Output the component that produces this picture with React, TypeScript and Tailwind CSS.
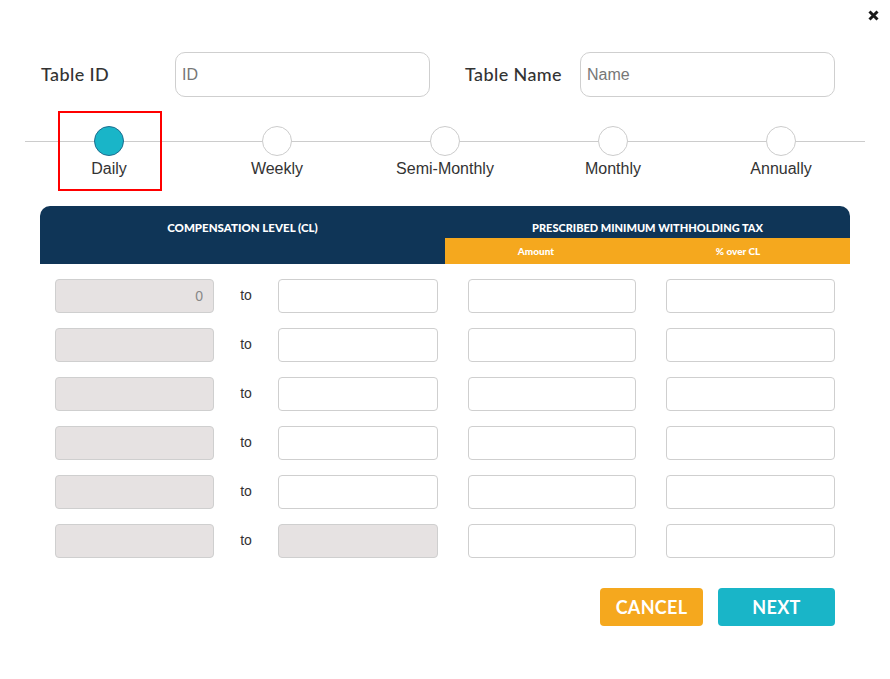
import React from 'react';

const steps = ['Daily', 'Weekly', 'Semi-Monthly', 'Monthly', 'Annually'];
const rows = [0, 1, 2, 3, 4, 5];

const inputBase =
  'h-[34px] rounded-[4px] border border-[#cfcfcf] px-[10px] text-[14px] outline-none box-border';

export default function App() {
  return (
    <div className="relative w-[890px] h-[679px] bg-white font-['Liberation_Sans',Arial,sans-serif] text-[#333]">
      <button className="absolute left-[868px] top-[10px] w-[11px] h-[11px]" aria-label="close">
        <svg width="11" height="11" viewBox="0 0 11 11">
          <path d="M1.5 1.5 L9.5 9.5 M9.5 1.5 L1.5 9.5" stroke="#1a1a1a" strokeWidth="3" strokeLinecap="butt" />
        </svg>
      </button>

      <div className="pt-[52px] pl-[41px] flex items-center">
        <label className="w-[134px] text-[18px] font-medium text-[#333] font-['Lato',sans-serif] tracking-[0.4px]">
          Table ID
        </label>
        <input
          placeholder="ID"
          className="w-[255px] h-[45px] rounded-[10px] border border-[#cfcfcf] px-[6px] text-[16px] placeholder:text-[#777] outline-none"
        />
        <label className="ml-[35px] w-[115px] text-[18px] font-medium text-[#333] font-['Lato',sans-serif] tracking-[0.4px]">
          Table Name
        </label>
        <input
          placeholder="Name"
          className="w-[255px] h-[45px] rounded-[10px] border border-[#cfcfcf] px-[6px] text-[16px] placeholder:text-[#777] outline-none"
        />
      </div>

      <div className="relative mt-[14px] ml-[25px] w-[840px] grid grid-cols-5">
        <div className="absolute left-0 right-0 top-[30px] h-px bg-[#cccccc]" />
        {steps.map((s, i) => (
          <div key={s} className="flex justify-center">
            <div
              className={
                'relative w-[104px] h-[80px] border-2 box-border flex flex-col items-center pt-[13px] ' +
                (i === 0 ? 'border-[#ff0000] ml-[2px]' : 'border-transparent')
              }
            >
              <div
                className={
                  'w-[30px] h-[30px] rounded-full border ' +
                  (i === 0 ? 'bg-[#19b5c8] border-[#1f6d8f] -ml-[2px]' : 'bg-white border-[#cccccc]')
                }
              />
              <span className={'mt-[4px] text-[16px] leading-[18px] text-[#333] whitespace-nowrap ' + (i === 0 ? '-ml-[2px]' : '')}>
                {s}
              </span>
            </div>
          </div>
        ))}
      </div>

      <div className="mt-[15px] ml-[40px] w-[810px] h-[58px] bg-[#0f3557] rounded-t-[10px] flex text-white font-['Lato',sans-serif] font-black">
        <div className="w-[405px] h-[32px] flex items-end justify-center pb-[3px] text-[11.5px] leading-[14px]">
          COMPENSATION LEVEL (CL)
        </div>
        <div className="w-[405px] flex flex-col">
          <div className="h-[32px] flex items-end justify-center pb-[3px] text-[11px] leading-[14px]">
            PRESCRIBED MINIMUM WITHHOLDING TAX
          </div>
          <div className="h-[26px] bg-[#f5a81e] flex items-center text-[10px]">
            <span className="w-[182px] text-center">Amount</span>
            <span className="w-[222px] text-center">% over CL</span>
          </div>
        </div>
      </div>

      <div className="mt-[15px] ml-[55px] flex flex-col gap-[15px]">
        {rows.map((r) => (
          <div key={r} className="flex items-center">
            <input
              readOnly
              defaultValue={r === 0 ? '0' : ''}
              className={inputBase + ' w-[159px] bg-[#e6e2e2] text-right text-[#888]'}
            />
            <span className="w-[64px] text-center text-[14px] leading-[14px] -mt-[2px] text-[#333]">to</span>
            <input
              readOnly={r === 5}
              className={inputBase + ' w-[160px] ' + (r === 5 ? 'bg-[#e6e2e2]' : 'bg-white')}
            />
            <input className={inputBase + ' ml-[30px] w-[168px] bg-white'} />
            <input className={inputBase + ' ml-[30px] w-[169px] bg-white'} />
          </div>
        ))}
      </div>

      <div className="mt-[30px] mr-[55px] flex justify-end gap-[15px] font-['Lato',sans-serif]">
        <button className="w-[103px] h-[38px] rounded-[4px] bg-[#f5a81e] text-white text-[18px] font-bold tracking-[0.3px]">
          CANCEL
        </button>
        <button className="w-[117px] h-[38px] rounded-[4px] bg-[#19b5c8] text-white text-[18px] font-bold tracking-[0.3px]">
          NEXT
        </button>
      </div>
    </div>
  );
}
